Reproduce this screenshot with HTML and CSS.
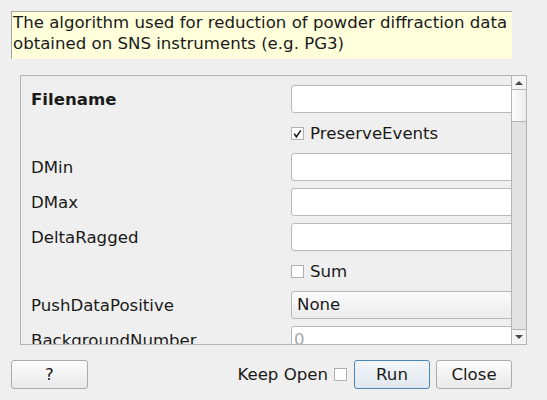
FILE: index.html
```html
<!DOCTYPE html>
<html>
<head>
<meta charset="utf-8">
<link rel="stylesheet" href="styles.css">
</head>
<body>
<div class="dialog">
  <div class="desc">The algorithm used for reduction of powder diffraction data<br>obtained on SNS instruments (e.g. PG3)</div>
  <div class="scrollarea">
    <div class="viewport">
      <div class="form">
        <div class="label bold">Filename</div>
        <div class="field"><div class="input"></div></div>

        <div class="label"></div>
        <div class="field"><div class="check"><span class="box"><svg width="11" height="11" viewBox="0 0 11 11"><path d="M2.2 5.6 L4.4 8.8 L8.8 2.4" fill="none" stroke="#1e1e1e" stroke-width="1.6"/></svg></span>PreserveEvents</div></div>

        <div class="label">DMin</div>
        <div class="field"><div class="input"></div></div>

        <div class="label">DMax</div>
        <div class="field"><div class="input"></div></div>

        <div class="label">DeltaRagged</div>
        <div class="field"><div class="input"></div></div>

        <div class="label"></div>
        <div class="field"><div class="check"><span class="box"></span>Sum</div></div>

        <div class="label">PushDataPositive</div>
        <div class="field"><div class="combo">None</div></div>

        <div class="label">BackgroundNumber</div>
        <div class="field"><div class="input placeholder">0</div></div>
      </div>
    </div>
    <div class="vscroll">
      <div class="sbtn"><span class="arrow-up"></span></div>
      <div class="handle"></div>
      <div class="track"></div>
      <div class="sbtn bottom"><span class="arrow-down"></span></div>
    </div>
  </div>
  <div class="buttons">
    <div class="btn help">?</div>
    <div class="spacer"></div>
    <div class="keep">Keep Open <span class="box"></span></div>
    <div class="actions">
      <div class="btn run">Run</div>
      <div class="btn">Close</div>
    </div>
  </div>
</div>
</body>
</html>
```

FILE: styles.css
```css
html, body {
  margin: 0;
  padding: 0;
  background: #efefef;
}
body {
  font-family: "DejaVu Sans", sans-serif;
  font-size: 16.6px;
  color: #1a1a1a;
  width: 547px;
  height: 400px;
  overflow: hidden;
}
.dialog {
  padding: 11px 35px 0 11px;
  display: flex;
  flex-direction: column;
}
.desc {
  background: #ffffdc;
  border-top: 1px solid #a6a6a6;
  border-left: 1px solid #a6a6a6;
  padding: 1px 0 0 1px;
  line-height: 20.5px;
  white-space: nowrap;
  overflow: hidden;
  box-sizing: border-box;
  height: 48px;
}
.scrollarea {
  margin: 16px -15px 0 9px;
  height: 270px;
  border: 1px solid #b4b4b4;
  box-sizing: border-box;
  display: flex;
}
.viewport {
  flex: 1;
  overflow: hidden;
  padding: 9px 0 0 10px;
}
.form {
  display: grid;
  grid-template-columns: 260px 240px;
  grid-template-rows: 28px 26px 28px 28px 28px 26px 28px 28px;
  row-gap: 7px;
}
.label {
  display: flex;
  align-items: center;
  white-space: nowrap;
}
.bold {
  font-weight: bold;
}
.field {
  display: flex;
  align-items: center;
}
.input {
  width: 100%;
  height: 28px;
  box-sizing: border-box;
  background: #ffffff;
  border: 1px solid #b8b8b8;
  border-radius: 3px;
  padding: 3px 2px 0;
  line-height: 20px;
}
.placeholder {
  color: #a8a8a8;
}
.combo {
  width: 100%;
  height: 28px;
  box-sizing: border-box;
  background: linear-gradient(#fbfbfb, #ececec);
  border: 1px solid #b8b8b8;
  border-radius: 3px;
  padding: 3px 5px 0;
  line-height: 20px;
}
.check {
  display: flex;
  align-items: center;
  gap: 6px;
}
.box {
  display: inline-flex;
  align-items: center;
  justify-content: center;
  width: 13px;
  height: 13px;
  box-sizing: border-box;
  background: #ffffff;
  border: 1px solid #b0b0b0;
}
.vscroll {
  width: 14px;
  border-left: 1px solid #b4b4b4;
  display: flex;
  flex-direction: column;
  background: #e2e2e2;
}
.sbtn {
  height: 13px;
  background: #f4f4f4;
  border-bottom: 1px solid #b4b4b4;
  display: flex;
  align-items: center;
  justify-content: center;
}
.sbtn.bottom {
  border-bottom: none;
  border-top: 1px solid #b4b4b4;
  height: 14px;
}
.arrow-up {
  width: 0;
  height: 0;
  border-left: 4px solid transparent;
  border-right: 4px solid transparent;
  border-bottom: 4px solid #4a4a4a;
}
.arrow-down {
  width: 0;
  height: 0;
  border-left: 4px solid transparent;
  border-right: 4px solid transparent;
  border-top: 4px solid #4a4a4a;
}
.handle {
  height: 31px;
  background: linear-gradient(90deg, #fdfdfd, #ececec);
  border-bottom: 1px solid #b4b4b4;
}
.track {
  flex: 1;
}
.buttons {
  margin-top: 15px;
  display: flex;
  align-items: center;
  gap: 7px;
}
.spacer {
  flex: 1;
}
.actions {
  display: flex;
  gap: 6px;
}
.btn {
  width: 76px;
  height: 29px;
  box-sizing: border-box;
  border: 1px solid #acacac;
  border-radius: 3px;
  background: linear-gradient(#fcfcfc, #e9e9e9);
  display: flex;
  align-items: center;
  justify-content: center;
}
.btn.help {
  width: 77px;
}
.btn.run {
  border-color: #4a86b8;
  background: linear-gradient(#f3f6f9, #dfe7ef);
}
.keep {
  display: flex;
  align-items: center;
  gap: 6px;
}
```
